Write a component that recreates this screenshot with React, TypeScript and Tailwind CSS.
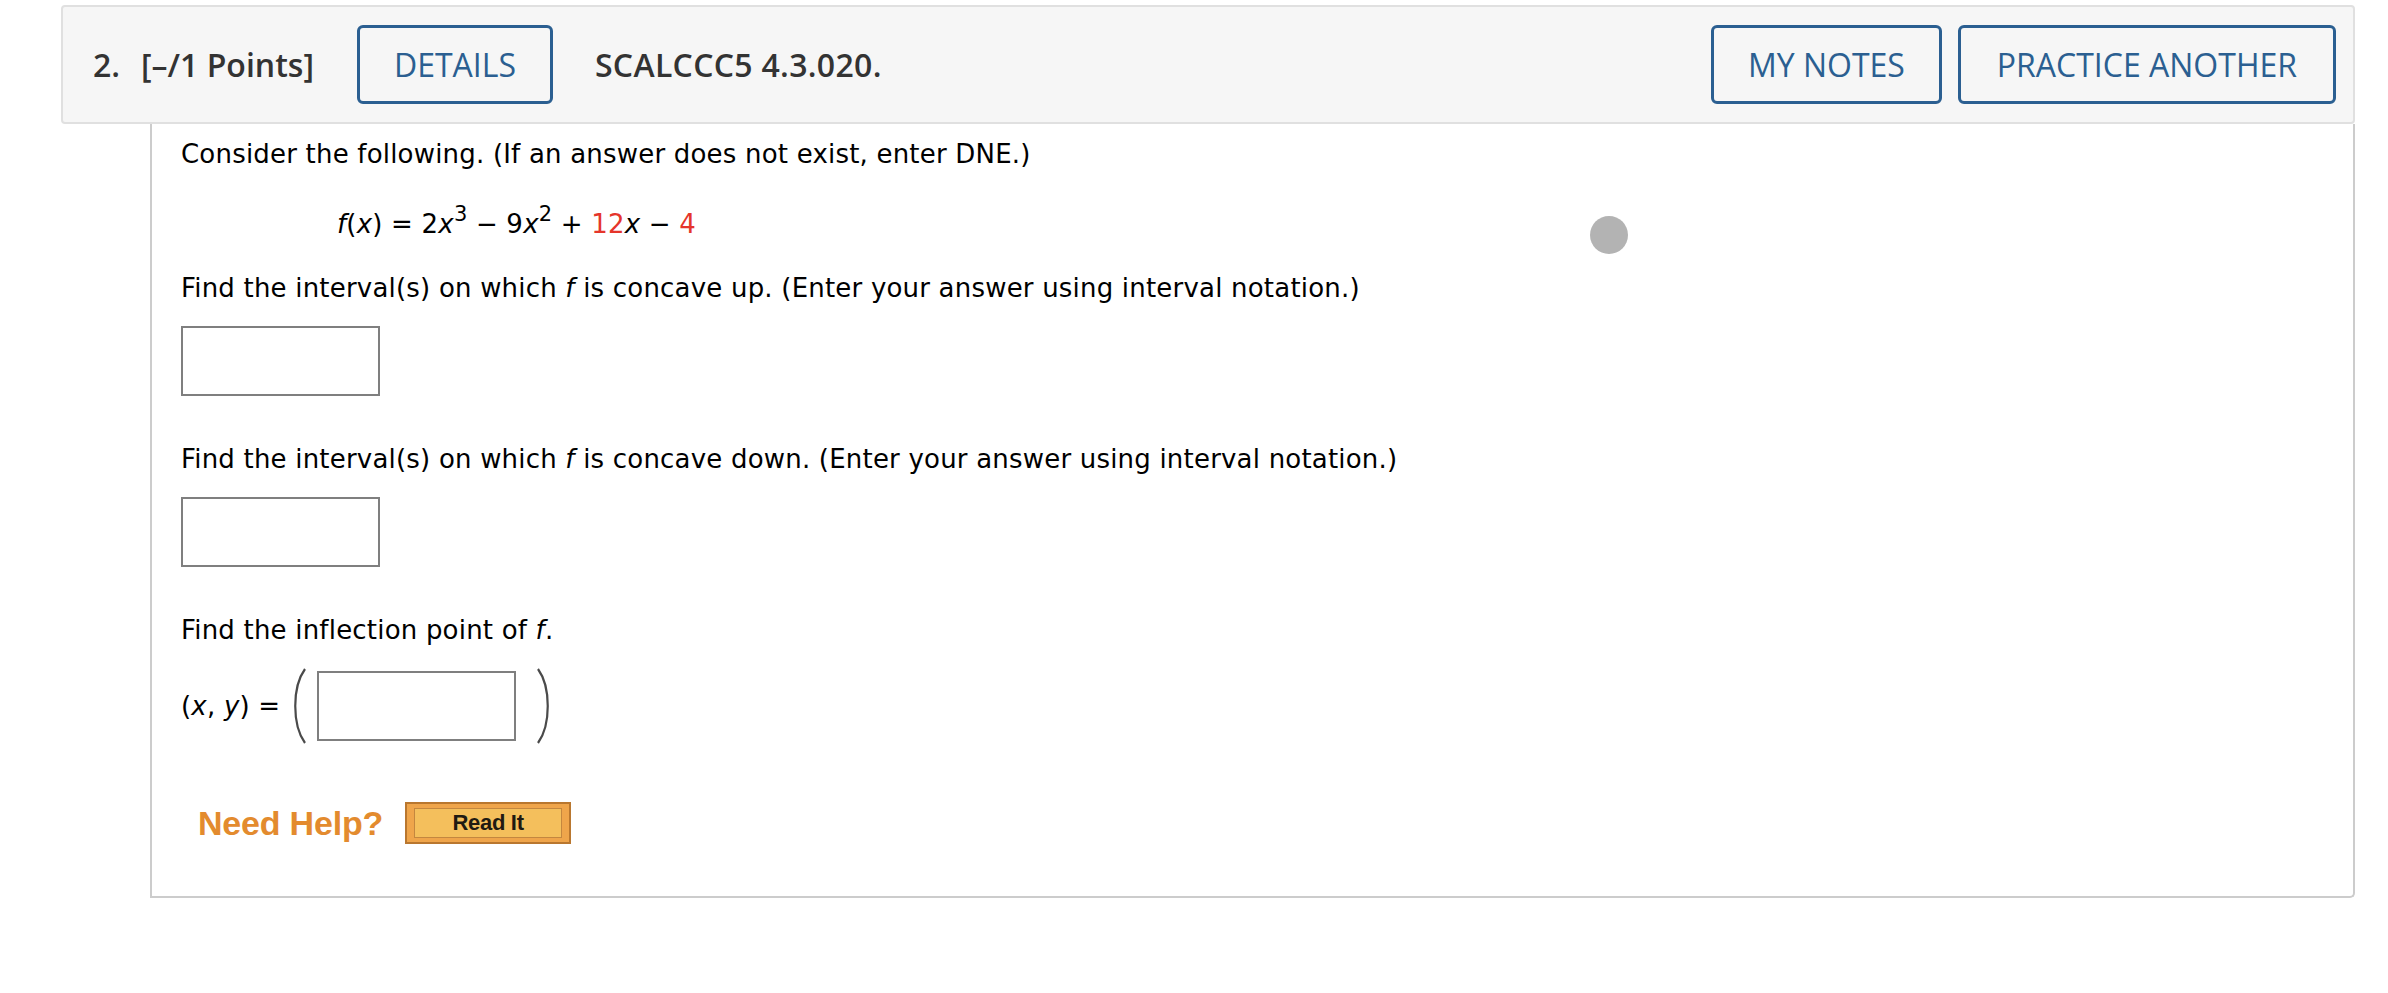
import React from "react";

function Paren({ right = false }: { right?: boolean }) {
  return (
    <svg width="18" height="78" viewBox="0 0 18 78" className="shrink-0">
      {right ? (
        <path d="M3 2 C 16 20, 16 58, 3 76" stroke="#4a4a4a" strokeWidth="2.2" fill="none" />
      ) : (
        <path d="M15 2 C 2 20, 2 58, 15 76" stroke="#4a4a4a" strokeWidth="2.2" fill="none" />
      )}
    </svg>
  );
}

function Box({ className = "" }: { className?: string }) {
  return <div className={"w-[199px] h-[70px] border-2 border-[#7f7f7f] bg-white shrink-0 " + className} />;
}

export default function App() {
  const btn =
    "h-[79px] rounded-[6px] border-[3px] border-[#2b5f91] text-[#2b5f91] text-[32px] font-normal flex items-center justify-center bg-transparent";
  return (
    <div className="relative w-[2388px] h-[993px] bg-white overflow-hidden">
      <div className="ml-[61px] mt-[5px] w-[2294px]">
        <header className="h-[119px] flex items-center rounded-[4px] border-2 border-[#e0e0e0] bg-[#f6f6f6] pl-[30px] pr-[17px] font-['Open_Sans',sans-serif] text-[32px] leading-none">
          <span className="font-semibold text-[#333333]">2.</span>
          <span className="ml-[21px] font-semibold text-[#333333]">[–/1 Points]</span>
          <button className={btn + " ml-[43px] px-[34px]"}>DETAILS</button>
          <span className="ml-[42px] font-semibold text-[#333333] tracking-[0.3px]">SCALCCC5 4.3.020.</span>
          <div className="ml-auto flex gap-[16px]">
            <button className={btn + " px-[34px]"}>MY NOTES</button>
            <button className={btn + " px-[36px]"}>PRACTICE ANOTHER</button>
          </div>
        </header>
        <section className="ml-[89px] h-[774px] border-x-2 border-b-2 border-[#cccccc] rounded-br-[5px] pl-[29px] pt-[15px] font-['DejaVu_Sans','Verdana',sans-serif] text-[26px] leading-[30px] tracking-[0.2px] text-black flex flex-col items-start">
          <p>Consider the following. (If an answer does not exist, enter DNE.)</p>
          <p className="mt-[40px] pl-[156px] whitespace-pre">
            <i>f</i>(<i>x</i>) = 2<i>x</i>
            <sup className="text-[21px] top-[-0.55em]">3</sup> − 9<i>x</i>
            <sup className="text-[21px] top-[-0.55em]">2</sup> + <span className="text-[#e5352b]">12</span>
            <i>x</i> − <span className="text-[#e5352b]">4</span>
          </p>
          <p className="mt-[34px]">
            Find the interval(s) on which <i>f</i> is concave up. (Enter your answer using interval notation.)
          </p>
          <Box className="mt-[23px]" />
          <p className="mt-[48px]">
            Find the interval(s) on which <i>f</i> is concave down. (Enter your answer using interval notation.)
          </p>
          <Box className="mt-[23px]" />
          <p className="mt-[48px]">
            Find the inflection point of <i>f</i>.
          </p>
          <div className="mt-[22px] flex items-center h-[78px]">
            <span>
              (<i>x</i>, <i>y</i>) =
            </span>
            <span className="ml-[10px]">
              <Paren />
            </span>
            <Box className="ml-[9px]" />
            <span className="ml-[19px]">
              <Paren right />
            </span>
          </div>
          <div className="mt-[57px] ml-[17px] flex items-center">
            <span className="font-['Liberation_Sans',Arial,sans-serif] font-bold text-[34px] leading-none text-[#e38b2e] tracking-[-0.2px]">
              Need Help?
            </span>
            <div className="ml-[22px] w-[166px] h-[42px] border-2 border-[#b9772f] bg-[#efa54b] px-[7px] py-[4px]">
              <div className="w-full h-full border border-[#c4873f] bg-[#f4bf5c] flex items-center justify-center font-['Liberation_Sans',Arial,sans-serif] font-bold text-[22px] leading-none tracking-[-0.3px] text-[#1f1a12]">
                Read It
              </div>
            </div>
          </div>
        </section>
      </div>
      <div className="absolute left-[1590px] top-[216px] w-[38px] h-[38px] rounded-full bg-[#b3b3b3]" />
    </div>
  );
}
